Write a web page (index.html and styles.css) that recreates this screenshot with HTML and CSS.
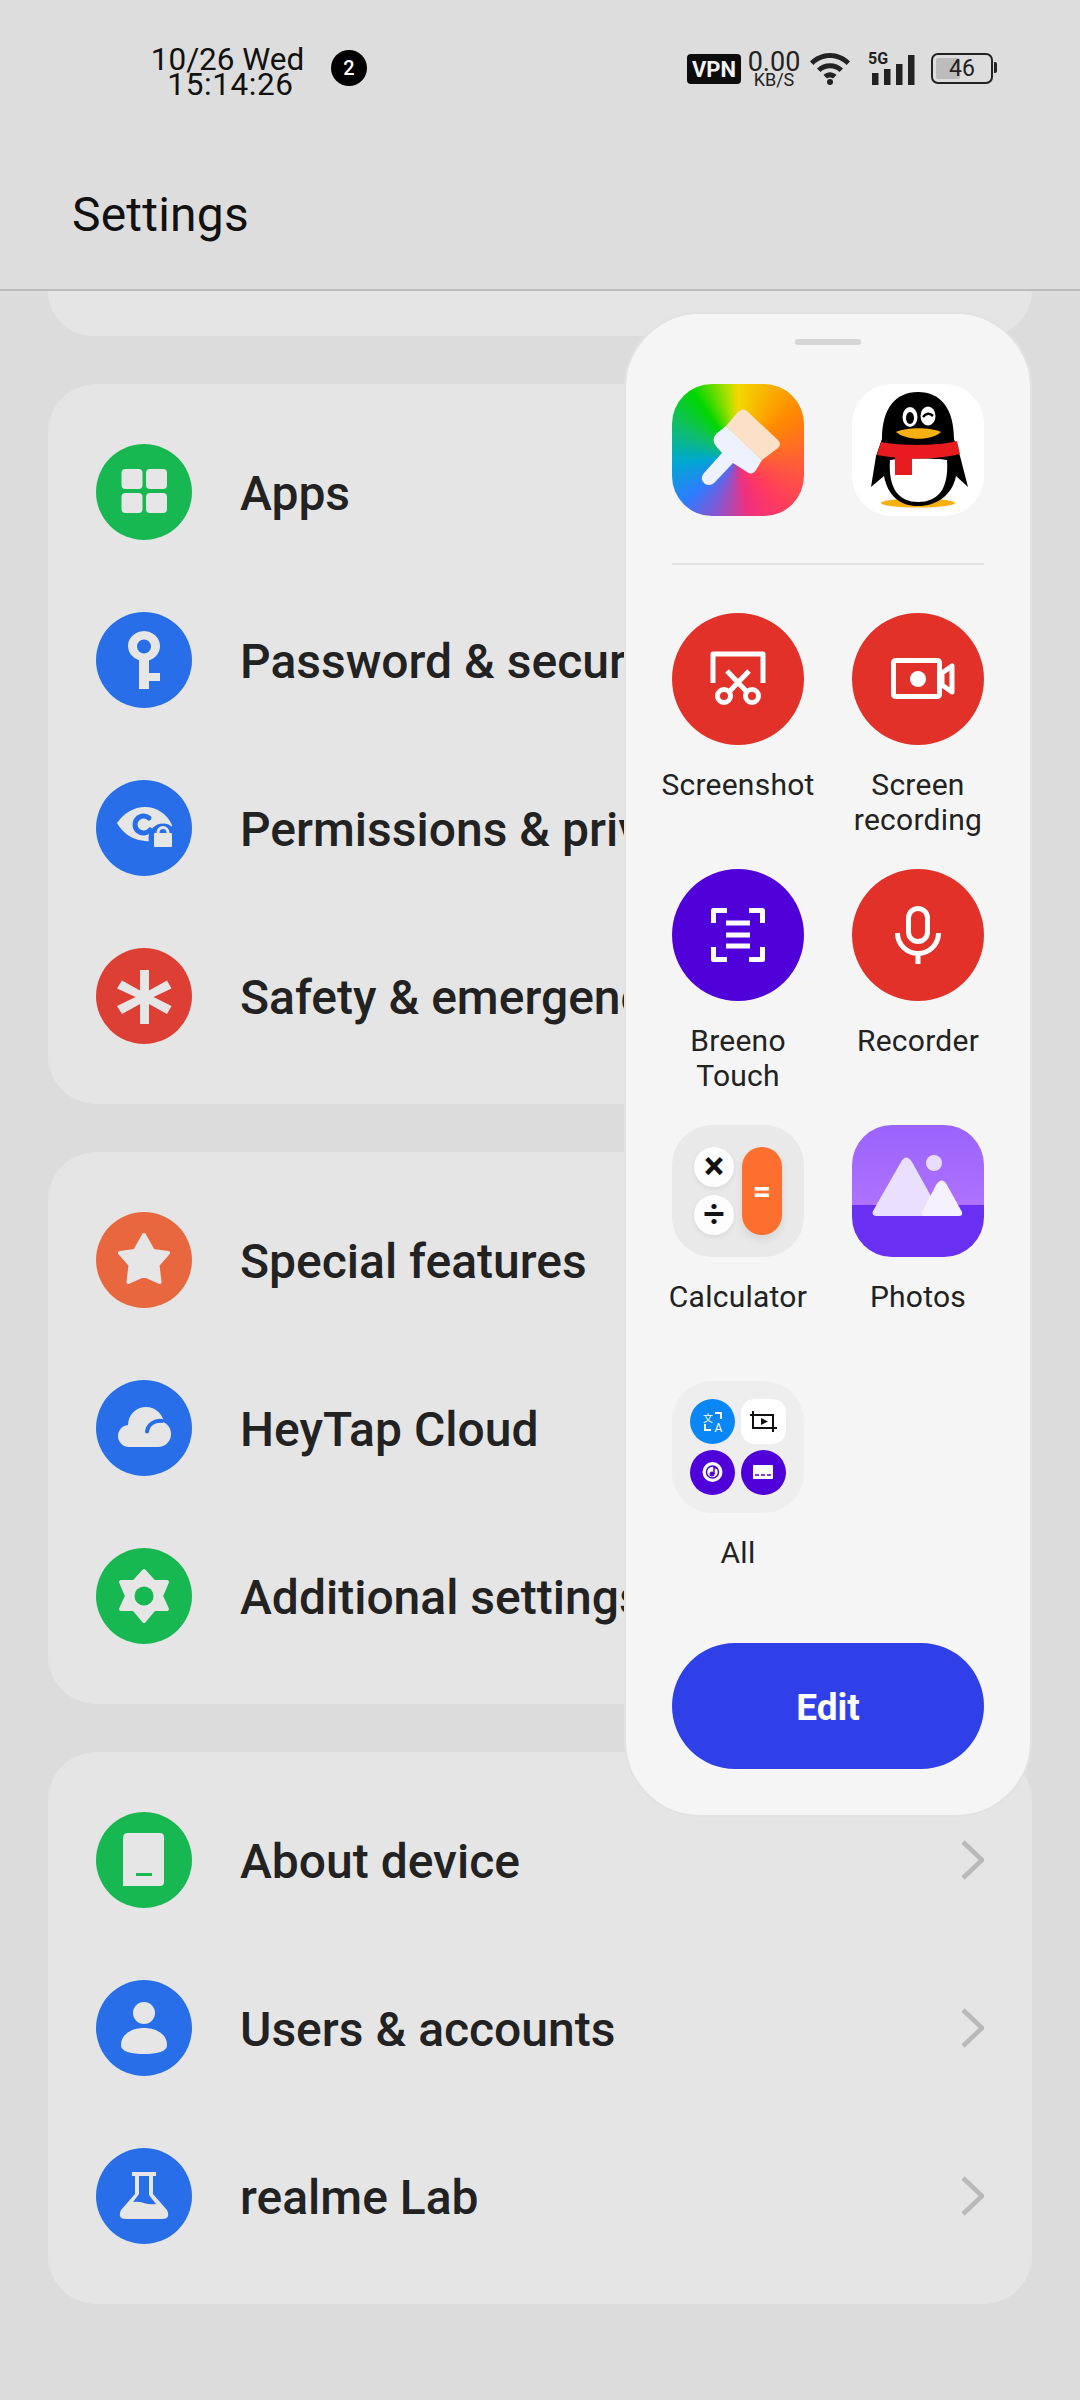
FILE: index.html
```html
<!DOCTYPE html>
<html lang="en">
<head>
<meta charset="utf-8">
<title>Settings</title>
<link rel="stylesheet" href="styles.css">
</head>
<body>
<div class="phone">
  <header class="top">
    <div class="status">
      <div class="clock"><span>10/26 Wed</span><span class="clock-time">15:14:26</span></div>
      <div class="notif">2</div>
      <div class="status-right">
        <div class="vpn">VPN</div>
        <div class="speed"><span class="speed-num">0.00</span><span class="speed-unit">KB/S</span></div>
        <svg class="wifi" viewBox="0 0 42 34"><path d="M1 10.500C12 -1 30 -1 41 10.500L37.600 14C28.500 4.800 13.500 4.800 4.400 14Z"/><path d="M8 17.500C15 10.500 27 10.500 34 17.500L30.500 21C25.500 16 16.500 16 11.500 21Z"/><path d="M14.500 24C18.500 20.300 23.500 20.300 27.500 24L24 27.500C22.500 26 19.500 26 18 27.500Z"/><circle cx="21" cy="31" r="3"/></svg>
        <div class="signal">
          <span class="five-g">5G</span>
          <svg class="bars" viewBox="0 0 44 31"><rect x="1" y="19" width="6.500" height="12"/><rect x="13" y="15" width="6.500" height="16"/><rect x="25" y="10" width="6.500" height="21"/><rect x="37" y="1" width="6.500" height="30"/></svg>
        </div>
        <div class="battery"><div class="battery-fill"></div><span class="battery-num">46</span><i class="battery-tip"></i></div>
      </div>
    </div>
    <div class="title">Settings</div>
  </header>

  <main class="list">
    <section class="card card-cut"></section>

    <section class="card">
      <div class="row"><div class="ico green"><svg viewBox="0 0 96 96"><rect x="25.500" y="25" width="21" height="20" rx="4"/><rect x="50" y="25" width="21" height="20" rx="4"/><rect x="25.500" y="49" width="21" height="20" rx="4"/><rect x="50" y="49" width="21" height="20" rx="4"/></svg></div><span class="name">Apps</span><svg class="chev" viewBox="0 0 26 40"><path d="M5 2L24 20L5 38"/></svg></div>
      <div class="row"><div class="ico blue"><svg viewBox="0 0 96 96"><path fill-rule="evenodd" d="M32 34A16 15 0 1 1 53 48.300V61H64V69H53V77H43V48.300A16 15 0 0 1 32 34ZM48 27.500A7 7 0 1 0 48 41.500A7 7 0 1 0 48 27.500Z"/></svg></div><span class="name">Password &amp; security</span><svg class="chev" viewBox="0 0 26 40"><path d="M5 2L24 20L5 38"/></svg></div>
      <div class="row"><div class="ico blue"><svg viewBox="0 0 96 96"><path d="M21 43C28 33 38 27 49 27C61 27 71 34 76 45V60L60 61C37 63 27 53 21 43Z"/><circle class="blue-fill" cx="67" cy="58" r="14.500"/><path class="cut" d="M53 38A8.500 8.500 0 1 0 54 50"/><rect x="58" y="53" width="18" height="14" rx="1"/><path class="thin" d="M62 54V52.500A5 5 0 0 1 72 52.500V54"/></svg></div><span class="name">Permissions &amp; privacy</span><svg class="chev" viewBox="0 0 26 40"><path d="M5 2L24 20L5 38"/></svg></div>
      <div class="row"><div class="ico red"><svg viewBox="0 0 96 96"><path d="M44 22H53V42.500L71 32.500L75.500 40.500L57.500 49L75.500 58L71 66L53 56V76H44V56L26 66L21 58L39.500 49L21 40.500L26 32.500L44 42.500Z"/></svg></div><span class="name">Safety &amp; emergency</span><svg class="chev" viewBox="0 0 26 40"><path d="M5 2L24 20L5 38"/></svg></div>
    </section>

    <section class="card">
      <div class="row"><div class="ico orange"><svg viewBox="0 0 96 96"><path class="rnd" d="M48 23L57 39L72 41L61.500 53L63.500 70L48 63L32.500 70L34.500 53L24 41L39 39Z"/></svg></div><span class="name">Special features</span><svg class="chev" viewBox="0 0 26 40"><path d="M5 2L24 20L5 38"/></svg></div>
      <div class="row"><div class="ico blue"><svg viewBox="0 0 96 96"><circle cx="33" cy="56" r="11"/><circle cx="50" cy="45" r="18"/><circle cx="62" cy="54" r="13"/><rect x="33" y="50" width="29" height="17"/><path class="blue-line" d="M51 51.500C52 44 59 40 66 41"/></svg></div><span class="name">HeyTap Cloud</span><svg class="chev" viewBox="0 0 26 40"><path d="M5 2L24 20L5 38"/></svg></div>
      <div class="row"><div class="ico green"><svg viewBox="0 0 96 96"><path class="rnd" d="M48 23L58 34H71L65 48L71 61H58L48 73L38 61H25L31 48L25 34H38Z"/><circle class="green-fill" cx="48" cy="48" r="9.500"/></svg></div><span class="name">Additional settings</span><svg class="chev" viewBox="0 0 26 40"><path d="M5 2L24 20L5 38"/></svg></div>
    </section>

    <section class="card">
      <div class="row"><div class="ico green"><svg viewBox="0 0 96 96"><path fill-rule="evenodd" d="M32 21H64Q68 21 68 25V70Q68 74 64 74H27V26Q27 21 32 21ZM40 61V64H56V61Z"/></svg></div><span class="name">About device</span><svg class="chev" viewBox="0 0 26 40"><path d="M5 2L24 20L5 38"/></svg></div>
      <div class="row"><div class="ico blue"><svg viewBox="0 0 96 96"><ellipse cx="48" cy="33" rx="11" ry="11"/><path d="M25 65C25 54 36 48 48 48C60 48 71 54 71 65C71 72 60 74 48 74C36 74 25 72 25 65Z"/></svg></div><span class="name">Users &amp; accounts</span><svg class="chev" viewBox="0 0 26 40"><path d="M5 2L24 20L5 38"/></svg></div>
      <div class="row"><div class="ico blue"><svg viewBox="0 0 96 96"><path d="M36 24H60V28H57V46L71 62Q75 71 66 71H30Q21 71 25 62L39 46V28H36Z"/><path class="blue-fill" d="M43 28H53V47L60 56Q54 57 48 55Q42 53 37 54L43 46Z"/></svg></div><span class="name">realme Lab</span><svg class="chev" viewBox="0 0 26 40"><path d="M5 2L24 20L5 38"/></svg></div>
    </section>
  </main>

  <aside class="panel">
    <div class="handle"></div>
    <div class="pinned">
      <div class="app">
        <div class="tile rainbow"><svg viewBox="0 0 132 132"><path fill="#fde0c8" d="M54 42L66 28Q71 23 76 28L106 56Q110 60 106 64L90 76Z"/><path fill="#eef2ff" d="M54 42L90 76L84 86Q80 92 75 88L61 79L44 97Q39 103 33 100Q27 95 32 89L50 69L44 62Q39 56 44 50Z"/></svg></div>
      </div>
      <div class="app">
        <div class="tile white"><svg viewBox="0 0 132 132">
          <ellipse cx="66" cy="119" rx="37" ry="4.500" fill="#f6b012"/>
          <path d="M30 55C30 25 43 8 66 8C89 8 102 25 102 55L108 72L116 103L104 92C100 112 84 122 66 122C48 122 36 112 32 92L19 103L24 72Z" fill="#000"/>
          <path d="M38 76C50 74 84 74 95 76C97 105 86 118 66 118C47 118 36 105 38 76Z" fill="#fff"/>
          <ellipse cx="58" cy="33" rx="7.500" ry="10" fill="#fff"/><ellipse cx="58" cy="34" rx="4" ry="6" fill="#000"/>
          <ellipse cx="76" cy="32" rx="7.500" ry="9.500" fill="#fff"/><path d="M71 33Q76 27 81 32" stroke="#000" stroke-width="2.500" fill="none"/>
          <path d="M44 48C55 43 78 43 89 48C80 57 54 57 44 48Z" fill="#f6b012"/>
          <path d="M29 58C50 62 85 62 105 57L108 70C85 76 50 76 25 71Z" fill="#e81c1f"/>
          <rect x="43" y="72" width="17" height="19" fill="#e81c1f"/>
        </svg></div>
      </div>
    </div>
    <div class="divider"></div>
    <div class="grid">
      <div class="app"><div class="tile round red-tile"><svg viewBox="0 0 132 132"><path class="st" d="M41 70V41H91V70"/><path class="st" d="M55 58L76 80M77 58L56 80"/><circle class="st" cx="52" cy="83" r="6.500"/><circle class="st" cx="80" cy="83" r="6.500"/></svg></div><div class="label">Screenshot</div></div>
      <div class="app"><div class="tile round red-tile"><svg viewBox="0 0 132 132"><rect class="st" x="41.500" y="47.500" width="46" height="36" rx="2"/><circle cx="66" cy="66" r="8" fill="#fff"/><path class="st" d="M90 60L100 53V79L90 72Z"/></svg></div><div class="label">Screen recording</div></div>
      <div class="app"><div class="tile round purple-tile"><svg viewBox="0 0 132 132"><path class="st" d="M55 41.500H41.500V54M90.500 54V41.500H77M41.500 78V90.500H55M77 90.500H90.500V78"/><path class="st" d="M54 54H78M54 66H78M54 77H78"/></svg></div><div class="label">Breeno Touch</div></div>
      <div class="app"><div class="tile round red-tile"><svg viewBox="0 0 132 132"><rect class="st" x="56.500" y="39.500" width="19" height="33" rx="9.500"/><path class="st" d="M45.500 64A20.500 20.500 0 0 0 86.500 64M66 85V95"/></svg></div><div class="label">Recorder</div></div>
      <div class="app"><div class="tile calc">
        <div class="calc-keys"><span class="calc-key">×</span><span class="calc-key calc-thin">÷</span></div>
        <div class="calc-eq">=</div>
      </div><div class="label">Calculator</div></div>
      <div class="app"><div class="tile photos"><svg viewBox="0 0 132 132"><circle cx="82" cy="38" r="8" fill="#e8dcff"/><path fill="#e8e0fd" d="M21 86L49 37Q54 28 60 37L90 91H25Q19 91 21 86Z"/><path fill="#f5f1ff" d="M70 87L84 60Q90 51 95 60L110 87Q111 91 107 91H72Q69 91 70 87Z"/></svg></div><div class="label">Photos</div></div>
      <div class="app"><div class="tile folder">
        <div class="mini mini-blue"><svg viewBox="0 0 45 45"><text class="mini-t" x="13" y="23">文</text><text class="mini-t mini-a" x="24.500" y="33">A</text><path class="mini-st" d="M25 14H31V20M15 25V31H21"/></svg></div>
        <div class="mini mini-white"><svg viewBox="0 0 45 45"><path class="mini-bk" d="M9 16H32V33M12 12V29H36"/><path d="M20 19L27 22.500L20 26Z" fill="#111"/></svg></div>
        <div class="mini mini-purple round-mini"><svg viewBox="0 0 45 45"><circle cx="22.500" cy="22" r="10" fill="#fff"/><circle class="mini-pu" cx="22.500" cy="22" r="6"/><circle cx="22" cy="24" r="2.500" fill="#5000d8"/><path class="mini-pu" d="M24 24V17L27 18.500"/></svg></div>
        <div class="mini mini-purple round-mini"><svg viewBox="0 0 45 45"><rect x="12" y="15" width="20" height="14" rx="1" fill="#fff"/><path class="mini-pu" d="M14 25H18M20 25H24M26 25H30"/></svg></div>
      </div><div class="label">All</div></div>
    </div>
    <div class="edit">Edit</div>
  </aside>
</div>
</body>
</html>
```
FILE: styles.css
```css
* { box-sizing: border-box; }
html, body { margin: 0; padding: 0; }
body { width: 1080px; height: 2400px; overflow: hidden; background: #dcdcdc; font-family: Roboto, "Noto Sans", sans-serif; color: #222; }
.phone { position: relative; width: 1080px; height: 2400px; overflow: hidden; background: #dcdcdc; }

.top { height: 291px; border-bottom: 2px solid #bdbdbd; display: flex; flex-direction: column; background: #dddddd; }
.status { height: 134px; position: relative; display: flex; align-items: flex-start; padding: 45px 0 0 149px; color: #111; }
.clock { width: 157px; display: flex; flex-direction: column; align-items: center; font-size: 31.5px; line-height: 25px; font-weight: 400; padding-top: 2px; }
.clock-time { letter-spacing: 0.6px; padding-left: 6px; }
.notif { margin: 5px 0 0 25px; width: 36px; height: 36px; border-radius: 50%; background: #000; color: #fff; font-size: 20px; display: flex; align-items: center; justify-content: center; font-weight: 500; }
.status-right { margin-left: auto; margin-right: 87px; display: flex; align-items: flex-start; padding-top: 6px; }
.vpn { width: 54px; height: 30px; background: #0c0c0c; border-radius: 4px; color: #f2f2f2; font-size: 22px; font-weight: 700; display: flex; align-items: center; justify-content: center; margin-top: 3px; }
.speed { width: 54px; margin-left: 6px; display: flex; flex-direction: column; align-items: center; color: #222; }
.speed-num { font-size: 27px; line-height: 20px; margin-top: 1px; font-weight: 400; }
.speed-unit { font-size: 18px; line-height: 14px; font-weight: 400; margin-top: 1px; }
.wifi { width: 42px; height: 34px; fill: #222; margin-left: 8px; }
.signal { position: relative; width: 46px; height: 34px; margin-left: 17px; }
.five-g { position: absolute; left: 0; top: -1px; font-size: 16px; line-height: 17px; font-weight: 700; color: #222; }
.bars { position: absolute; left: 3px; top: 3px; width: 44px; height: 31px; fill: #222; }
.battery { position: relative; width: 62px; height: 31px; margin: 2px 0 0 17px; border: 2px solid #222; border-radius: 7px; display: flex; align-items: center; justify-content: center; }
.battery-fill { position: absolute; left: 3px; top: 3px; bottom: 3px; width: 24px; background: #bcbcbc; border-radius: 2px; }
.battery-num { position: relative; font-size: 23px; color: #222; }
.battery-tip { position: absolute; right: -6px; top: 7px; width: 3px; height: 11px; background: #222; border-radius: 0 2px 2px 0; }
.title { font-size: 48px; letter-spacing: 0.2px; line-height: 60px; padding: 51px 0 0 72px; color: #111; }

.list { display: flex; flex-direction: column; gap: 48px; padding: 0 48px; }
.card { background: #e5e5e5; border-radius: 48px; padding: 24px 0; }
.card-cut { height: 45px; padding: 0; border-radius: 0 0 48px 48px; }
.row { height: 168px; display: flex; align-items: center; padding: 0 48px; }
.ico { width: 96px; height: 96px; border-radius: 50%; flex: none; }
.ico svg { display: block; width: 96px; height: 96px; fill: #e6e6e6; }
.green { background: #17b851; }
.blue { background: #276ee8; }
.red { background: #de3f35; }
.orange { background: #e8673f; }
.cut { fill: none; stroke: #276ee8; stroke-width: 5; stroke-linecap: round; }
.thin { fill: none; stroke: #e6e6e6; stroke-width: 3; }
.blue-line { fill: none; stroke: #276ee8; stroke-width: 4; stroke-linecap: round; }
.blue-fill { fill: #276ee8; }
.green-fill { fill: #17b851; }
.rnd { stroke: #e6e6e6; stroke-width: 4; stroke-linejoin: round; }
.name { margin-left: 48px; padding-top: 2px; font-size: 48px; font-weight: 480; letter-spacing: 0; color: #222; white-space: nowrap; flex: 1; }
.chev { width: 26px; height: 40px; fill: none; stroke: #b9b9b9; stroke-width: 4.500; flex: none; }

.panel { position: absolute; left: 624px; top: 312px; width: 408px; height: 1505px; background: #f5f5f5; border: 2px solid #e2e2e2; border-radius: 76px; padding: 25px 46px 0; display: flex; flex-direction: column; align-items: stretch; }
.handle { align-self: center; width: 66px; height: 6px; border-radius: 3px; background: #d5d5d5; flex: none; }
.pinned { display: grid; grid-template-columns: 132px 132px; column-gap: 48px; margin-top: 39px; }
.divider { height: 2px; background: #e0e0e0; margin-top: 47px; }
.grid { display: grid; grid-template-columns: 132px 132px; column-gap: 48px; grid-auto-rows: 256px; margin-top: 48px; }
.app { display: flex; flex-direction: column; align-items: center; }
.tile { width: 132px; height: 132px; border-radius: 40px; flex: none; overflow: hidden; position: relative; }
.tile svg { display: block; width: 132px; height: 132px; }
.round { border-radius: 50%; }
.white { background: #fff; }
.rainbow { background: conic-gradient(from 0deg at 50% 55%, #f2d800 0deg, #ff8a00 50deg, #ff5a3c 100deg, #ff3a60 140deg, #ee3080 170deg, #7a5ad8 205deg, #2f7cff 230deg, #00a8d0 265deg, #10c060 300deg, #00d600 325deg, #a8e000 350deg, #f2d800 360deg); }
.red-tile { background: #e23128; }
.purple-tile { background: #5000d8; }
.st { fill: none; stroke: #fff; stroke-width: 5; stroke-linejoin: round; }
.calc { background: #e9e9e9; }
.calc-keys { position: absolute; left: 22px; top: 22px; display: flex; flex-direction: column; gap: 8px; }
.calc-key { width: 40px; height: 40px; border-radius: 50%; background: #fdfdfd; box-shadow: 0 2px 5px rgba(0,0,0,.08); color: #111; font-size: 38px; line-height: 38px; font-weight: 700; text-align: center; }
.calc-thin { font-weight: 500; }
.calc-eq { position: absolute; left: 70px; top: 22px; width: 40px; height: 88px; border-radius: 20px; background: #fd6f2f; box-shadow: 0 5px 8px rgba(0,0,0,.08); color: #fff; font-size: 32px; font-weight: 700; display: flex; align-items: center; justify-content: center; }
.photos { background: linear-gradient(#9a63fb 0, #ae72ff 80px, #6a30f2 80px, #6a30f2 100%); }
.folder { background: #eeeeee; padding: 18px; display: grid; grid-template-columns: 45px 45px; grid-auto-rows: 45px; gap: 6px; }
.mini { width: 45px; height: 45px; border-radius: 14px; overflow: hidden; }
.mini svg { display: block; width: 45px; height: 45px; }
.mini-blue { background: #0a87f5; border-radius: 50%; }
.mini-white { background: #fff; }
.mini-purple { background: #5000d8; }
.round-mini { border-radius: 50%; }
.mini-st { fill: none; stroke: #fff; stroke-width: 1.800; }
.mini-t { fill: #fff; font-family: "Noto Sans CJK SC", sans-serif; font-size: 10px; }
.mini-a { font-family: Roboto, sans-serif; font-size: 12px; }
.mini-bk { fill: none; stroke: #111; stroke-width: 2; }
.mini-pu { fill: none; stroke: #5000d8; stroke-width: 1.500; }
.label { margin-top: 22px; width: 180px; text-align: center; font-size: 30px; font-weight: 420; letter-spacing: 0.25px; line-height: 35px; color: #222; }
.edit { position: absolute; left: 46px; top: 1329px; width: 312px; height: 126px; padding-top: 3px; border-radius: 63px; background: #2f40e8; color: #fff; font-size: 37px; font-weight: 700; display: flex; align-items: center; justify-content: center; }
```
